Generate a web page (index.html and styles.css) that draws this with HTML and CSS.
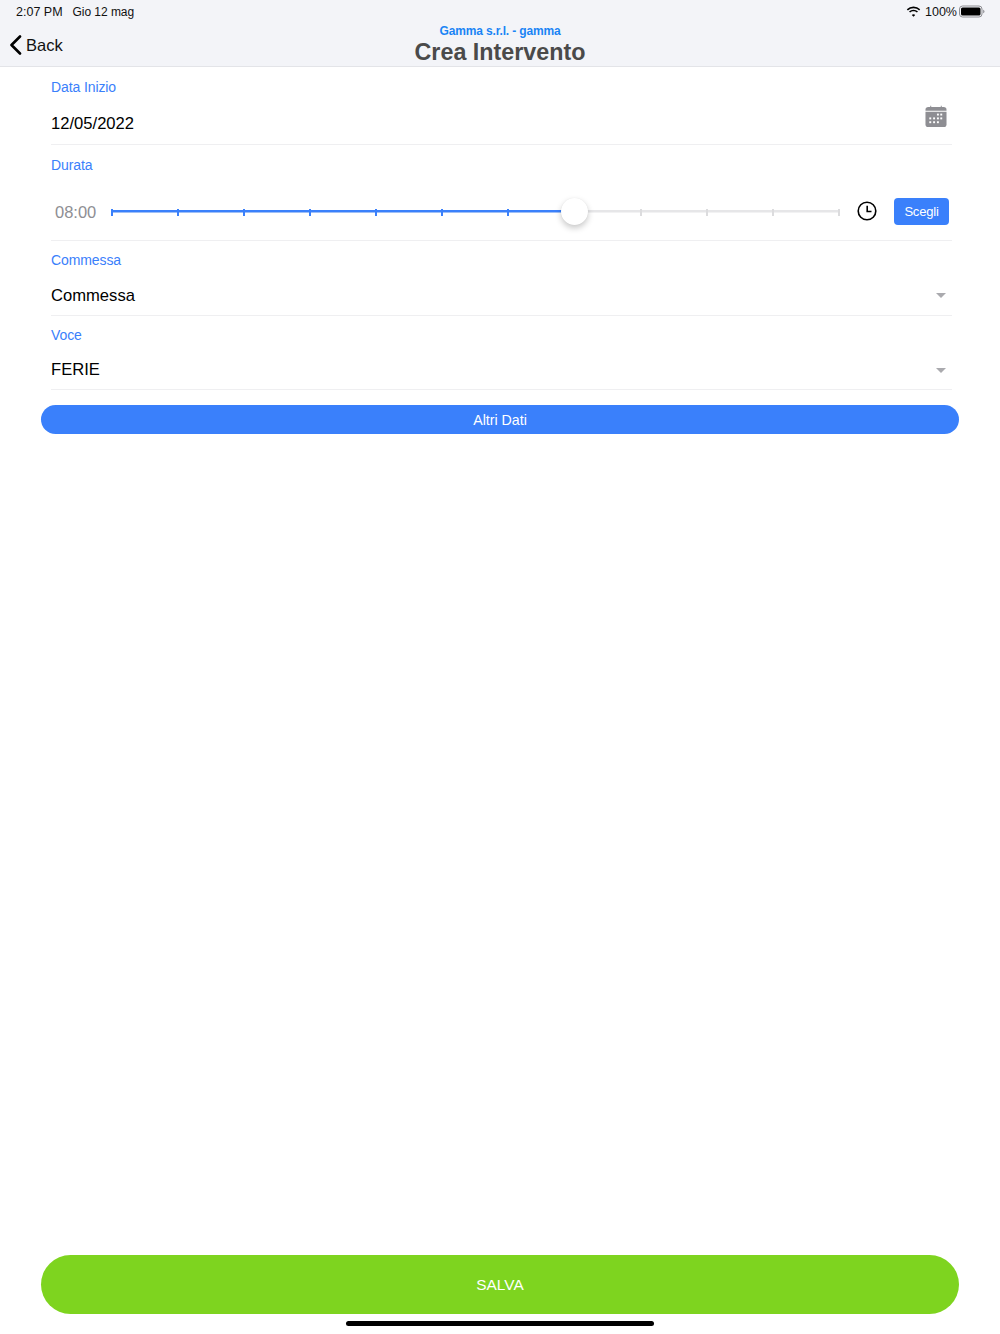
FILE: index.html
```html
<!DOCTYPE html>
<html lang="it">
<head>
<meta charset="utf-8">
<title>Crea Intervento</title>
<link rel="stylesheet" href="styles.css">
</head>
<body>
<div class="app">
  <header class="header">
    <div class="status">
      <div class="status-left"><span class="clock-text">2:07 PM</span><span class="date-text">Gio 12 mag</span></div>
      <div class="status-right">
        <svg class="wifi" width="15" height="11" viewBox="0 0 15 11"><path d="M7.500 2.200c2.200 0 4.100.8 5.600 2.200l1.100-1.200A9.800 9.800 0 0 0 7.500.5 9.800 9.800 0 0 0 .8 3.200l1.100 1.200a8.100 8.100 0 0 1 5.600-2.200zm0 3.100c1.300 0 2.500.5 3.400 1.300l1.100-1.200a6.600 6.600 0 0 0-9 0l1.100 1.200c.9-.8 2.100-1.300 3.400-1.300zm0 3c-.7 0-1.300.2-1.700.7l1.700 1.800 1.700-1.800c-.4-.5-1-.7-1.700-.7z" fill="#000"/></svg>
        <span>100%</span>
        <svg class="battery" width="26" height="13" viewBox="0 0 26 13"><rect x=".5" y="1" width="22.500" height="11" rx="3" fill="none" stroke="#8e8e93"/><rect x="2" y="2.500" width="19.500" height="8" rx="1.500" fill="#000"/><path d="M24.200 4.800c.8.300 1.300 1 1.300 1.700s-.5 1.400-1.300 1.700z" fill="#8e8e93"/></svg>
      </div>
    </div>
    <div class="nav">
      <a class="back">
        <svg width="13" height="20" viewBox="0 0 13 20"><path d="M11 1.500 2.500 10l8.500 8.500" fill="none" stroke="#000" stroke-width="2.600" stroke-linecap="round" stroke-linejoin="round"/></svg>
        <span class="back-text">Back</span>
      </a>
      <div class="titles">
        <div class="subtitle">Gamma s.r.l. - gamma</div>
        <h1 class="title">Crea Intervento</h1>
      </div>
    </div>
  </header>

  <main class="form">
    <section class="field field-date">
      <label class="label">Data Inizio</label>
      <div class="row row-date">
        <span class="value">12/05/2022</span>
        <svg class="calendar" width="22" height="22" viewBox="0 0 22 23">
          <path d="M3 2h2V.8h1V2h10V.8h1V2h2a3 3 0 0 1 3 3v1H0V5a3 3 0 0 1 3-3z" fill="#8e8e93"/>
          <path d="M0 7h22v13a3 3 0 0 1-3 3H3a3 3 0 0 1-3-3z" fill="#8e8e93"/>
          <g fill="#fff">
            <rect x="12" y="9" width="2" height="2"/><rect x="15.500" y="9" width="2" height="2"/>
            <rect x="4" y="13" width="2" height="2"/><rect x="8" y="13" width="2" height="2"/><rect x="12" y="13" width="2" height="2"/><rect x="15.500" y="13" width="2" height="2"/>
            <rect x="4" y="17" width="2" height="2"/><rect x="8" y="17" width="2" height="2"/><rect x="12" y="17" width="2" height="2"/>
          </g>
        </svg>
      </div>
    </section>

    <section class="field field-duration">
      <label class="label">Durata</label>
      <div class="row row-duration">
        <span class="time">08:00</span>
        <div class="slider">
          <div class="track"></div>
          <div class="fill"></div>
          <div class="ticks">
            <i class="tick on"></i><i class="tick on"></i><i class="tick on"></i><i class="tick on"></i><i class="tick on"></i><i class="tick on"></i><i class="tick on"></i><i class="tick on"></i><i class="tick"></i><i class="tick"></i><i class="tick"></i><i class="tick"></i>
          </div>
          <div class="thumb"></div>
        </div>
        <svg class="clock" width="20" height="20" viewBox="0 0 20 20"><circle cx="10" cy="10" r="8.800" fill="none" stroke="#000" stroke-width="1.600"/><path d="M10.200 4.800v5.700h4.300" fill="none" stroke="#000" stroke-width="1.600"/></svg>
        <button class="choose">Scegli</button>
      </div>
    </section>

    <section class="field field-select">
      <label class="label">Commessa</label>
      <div class="row row-select">
        <span class="value">Commessa</span>
        <i class="caret"></i>
      </div>
    </section>

    <section class="field field-select">
      <label class="label">Voce</label>
      <div class="row row-select">
        <span class="value">FERIE</span>
        <i class="caret"></i>
      </div>
    </section>

    <button class="more">Altri Dati</button>
  </main>

  <footer class="footer">
    <button class="save">SALVA</button>
    <div class="home"></div>
  </footer>
</div>
</body>
</html>
```
FILE: styles.css
```css
* { box-sizing: border-box; }
html, body { margin: 0; padding: 0; background: #fff; }
body { font-family: "Liberation Sans", Arial, sans-serif; color: #000; }
button { font-family: inherit; border: 0; margin: 0; padding: 0; color: #fff; }

.app { width: 1000px; height: 1334px; display: flex; flex-direction: column; overflow: hidden; }

.header { height: 67px; flex: none; background: #f3f4f8; border-bottom: 1px solid #e3e4e8; position: relative; }
.status { height: 24px; padding: 0 15px 1px 16px; display: flex; justify-content: space-between; align-items: center; color: #111; }
.status-left { display: flex; gap: 10px; }
.clock-text { font-size: 12.500px; }
.date-text { font-size: 12px; letter-spacing: -.05px; }
.status-right { display: flex; align-items: center; gap: 2px; font-size: 12.500px; }
.wifi { margin-right: 2px; }
.nav { position: relative; height: 42px; display: flex; align-items: center; }
.back { display: flex; align-items: center; gap: 4px; padding-left: 9px; font-size: 16.500px; color: #111; }
.titles { position: absolute; left: 0; right: 0; top: 0; text-align: center; }
.subtitle { font-size: 12px; letter-spacing: -.15px; font-weight: 700; line-height: 14px; color: #1a84f5; }
.title { margin: 0; font-size: 23.300px; font-weight: 700; line-height: 28px; color: #4a4a4a; }

.form { flex: 1; padding: 0 48px 0 51px; display: flex; flex-direction: column; }
.field { border-bottom: 1px solid #efeff1; }
.label { display: block; font-size: 14px; letter-spacing: -.1px; line-height: 17px; color: #3a80fb; }
.row { display: flex; align-items: center; }
.value { font-size: 16.600px; color: #000; }

.field-date { height: 78px; padding-top: 12px; }
.row-date { justify-content: space-between; height: 49px; padding: 7px 5px 0 0; }
.calendar { margin-top: -17px; }

.field-duration { height: 96px; padding-top: 12px; }
.row-duration { margin-top: 20px; height: 34px; padding-left: 4px; }
.time { width: 56px; font-size: 16.500px; color: #8e8e93; flex: none; padding-top: 3px; }
.slider { position: relative; width: 729px; height: 34px; flex: none; }
.track { position: absolute; left: 0; right: 0; top: 16px; height: 2px; background: #e6e6e8; box-shadow: 0 1px 0 rgba(230,230,232,.5); }
.fill { position: absolute; left: 0; width: 63.500%; top: 16px; height: 2px; background: #3a80fb; box-shadow: 0 1px 0 rgba(58,128,251,.45); }
.ticks { position: absolute; inset: 15px 0 auto 0; height: 7px; display: flex; justify-content: space-between; }
.tick { width: 2px; height: 7px; background: #dcdcde; }
.tick.on { background: #3a80fb; }
.thumb { position: absolute; left: 450px; top: 4px; width: 27px; height: 27px; border-radius: 50%; background: #fff; box-shadow: 0 3px 6px rgba(0,0,0,.22), 0 0 1px rgba(0,0,0,.08); }
.clock { margin-left: 17px; flex: none; }
.choose { margin-left: 17px; width: 55px; height: 27px; border-radius: 4px; background: #3a80fb; font-size: 13px; letter-spacing: -.2px; flex: none; }

.field-select { height: 74.500px; padding-top: 11px; }
.row-select { justify-content: space-between; height: 42.500px; padding: 8.500px 6px 0 0; margin-top: 1px; }
.caret { width: 0; height: 0; border-left: 5px solid transparent; border-right: 5px solid transparent; border-top: 5px solid #aaaaae; }

.more { margin: 15px -7px 0 -10px; height: 29px; flex: none; border-radius: 15px; background: #3a80fb; font-size: 14.200px; }

.footer { flex: none; height: 79px; padding: 0 41px; display: flex; flex-direction: column; align-items: center; }
.save { width: 918px; height: 59px; flex: none; border-radius: 30px; background: #7ed41f; font-size: 15.400px; }
.home { width: 308px; height: 5px; margin-top: 7px; border-radius: 3px; background: #000; flex: none; }
```
